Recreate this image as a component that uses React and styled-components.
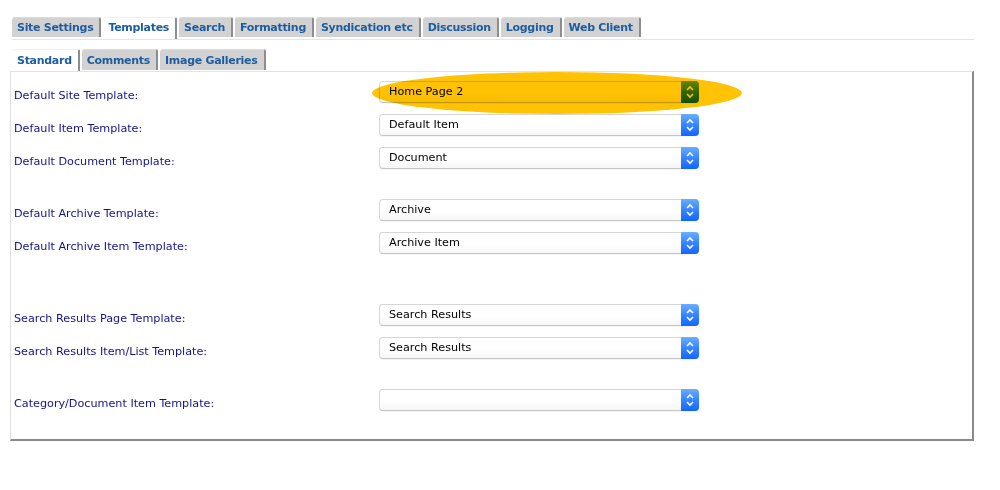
import React from "react";
import styled, { createGlobalStyle } from "styled-components";

const GlobalStyle = createGlobalStyle`
  body {
    margin: 0;
    background: #fff;
    font-family: "DejaVu Sans", Verdana, sans-serif;
  }
`;

const mainTabs = [
  "Site Settings",
  "Templates",
  "Search",
  "Formatting",
  "Syndication etc",
  "Discussion",
  "Logging",
  "Web Client",
];
const subTabs = ["Standard", "Comments", "Image Galleries"];

// gap = extra space above the row
const rows = [
  { label: "Default Site Template:", value: "Home Page 2", marked: true },
  { label: "Default Item Template:", value: "Default Item" },
  { label: "Default Document Template:", value: "Document" },
  { label: "Default Archive Template:", value: "Archive", gap: 19 },
  { label: "Default Archive Item Template:", value: "Archive Item" },
  { label: "Search Results Page Template:", value: "Search Results", gap: 39 },
  { label: "Search Results Item/List Template:", value: "Search Results" },
  { label: "Category/Document Item Template:", value: "", gap: 19 },
];

const Page = styled.div`
  width: 964px;
  padding: 17px 0 0 10px;
`;

const TabBar = styled.div`
  display: flex;
  align-items: flex-start;
  gap: 2px;
  height: 22px;
  margin-left: 2px;
  border-bottom: 1px solid #e4e4e4;
`;

const SubTabBar = styled(TabBar)`
  height: 22px;
  margin-top: 9px;
  border-bottom: none;
`;

const Tab = styled.div`
  height: ${(p) => (p.$active ? "22px" : p.$tall ? "21px" : "20px")};
  line-height: ${(p) => (p.$tall ? "21px" : "20px")};
  padding: 0 6px 0 5px;
  background: ${(p) => (p.$active ? "#fff" : "#d2d2d2")};
  border-right: 2px solid #8d8d8d;
  border-top: 1px solid ${(p) => (p.$active ? "#f0f0f0" : "#dcdcdc")};
  box-sizing: border-box;
  border-top-left-radius: 3px;
  border-top-right-radius: 2px;
  color: #1d5c9e;
  font-size: 11px;
  font-weight: bold;
  letter-spacing: -0.29px;
  white-space: nowrap;
`;

const Panel = styled.div`
  border-top: 1px solid #e2e2e2;
  border-left: 1px solid #dedede;
  border-right: 2px solid #8a8a8a;
  border-bottom: 2px solid #8a8a8a;
  padding: 3px 0 23px 3px;
`;

const Row = styled.div`
  display: grid;
  grid-template-columns: 365px 320px;
  align-items: center;
  height: 33px;
  margin-top: ${(p) => p.$gap || 0}px;
`;

const Label = styled.div`
  padding-top: 8px;
  color: #14148a;
  font-size: 11.2px;
`;

const SelectBox = styled.div`
  position: relative;
  display: flex;
  align-items: center;
  height: 22px;
  box-sizing: border-box;
  border: 1px solid #d6d6d6;
  border-bottom-color: #c4c4c4;
  border-radius: 4px;
  background: linear-gradient(#fff, #fff 55%, #f6f6f6);
  box-shadow: 0 1px 0 rgba(0, 0, 0, 0.04);
`;

const SelectText = styled.span`
  flex: 1;
  padding-left: 9px;
  color: #000;
  font-size: 11.2px;
`;

const Stepper = styled.div`
  align-self: stretch;
  width: 18px;
  margin: -1px -1px -1px 0;
  display: flex;
  align-items: center;
  justify-content: center;
  border-radius: 0 4px 4px 0;
  background: linear-gradient(#6aaeff, #3585ff 50%, #1466fb);
`;

const Marker = styled.div`
  position: absolute;
  left: -8px;
  top: -10px;
  width: 370px;
  height: 42px;
  border-radius: 50%;
  background: #ffc204;
  mix-blend-mode: multiply;
  pointer-events: none;
`;

const Chevrons = () => (
  <svg width="10" height="16" viewBox="0 0 10 16">
    <path
      d="M2 6 L5 3 L8 6 M2 10 L5 13 L8 10"
      fill="none"
      stroke="#fff"
      strokeWidth="1.6"
    />
  </svg>
);

const Select = ({ value, marked }) => (
  <SelectBox>
    <SelectText>{value}</SelectText>
    <Stepper>
      <Chevrons />
    </Stepper>
    {marked && <Marker />}
  </SelectBox>
);

export default function App() {
  return (
    <Page>
      <GlobalStyle />
      <TabBar>
        {mainTabs.map((t) => (
          <Tab key={t} $active={t === "Templates"}>
            {t}
          </Tab>
        ))}
      </TabBar>
      <SubTabBar>
        {subTabs.map((t) => (
          <Tab key={t} $tall $active={t === "Standard"}>
            {t}
          </Tab>
        ))}
      </SubTabBar>
      <Panel>
        {rows.map((r) => (
          <Row key={r.label} $gap={r.gap}>
            <Label>{r.label}</Label>
            <Select value={r.value} marked={r.marked} />
          </Row>
        ))}
      </Panel>
    </Page>
  );
}
